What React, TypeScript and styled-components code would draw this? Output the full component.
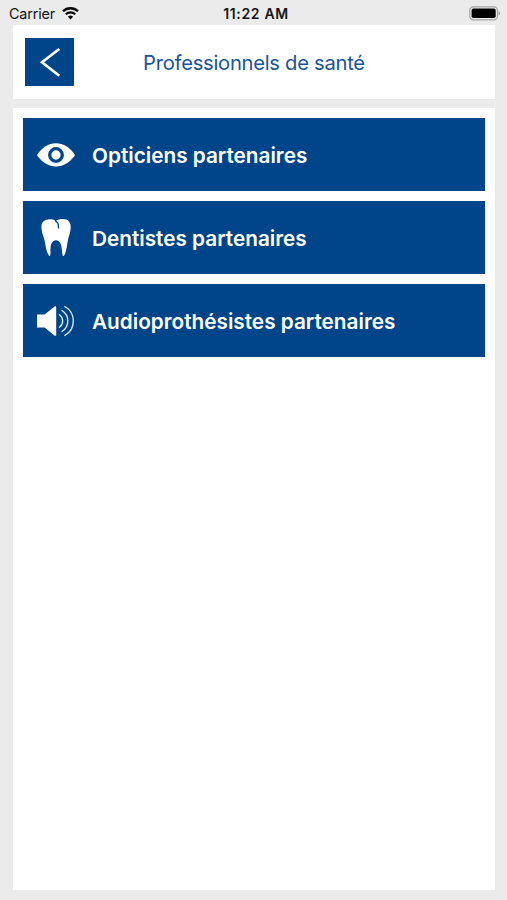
import React from "react";
import styled, { createGlobalStyle } from "styled-components";

const BLUE = "#004489";

const GlobalStyle = createGlobalStyle`
  * { box-sizing: border-box; }
  body {
    margin: 0;
    background: #ebebeb;
    font-family: Inter, "Liberation Sans", sans-serif;
  }
`;

const Screen = styled.div`
  width: 507px;
  height: 900px;
  display: flex;
  flex-direction: column;
  background: #ebebeb;
`;

const StatusBar = styled.div`
  flex: none;
  height: 25.3px;
  padding: 1px 6px 0 9px;
  display: grid;
  grid-template-columns: 1fr auto 1fr;
  align-items: center;
  color: #151515;
`;

const Carrier = styled.div`
  display: flex;
  align-items: center;
  gap: 7px;
  font-size: 14.4px;
  letter-spacing: -0.15px;
`;

const Clock = styled.div`
  margin-right: -2px;
  font-size: 14px;
  font-weight: 600;
  letter-spacing: 0.65px;
`;

const BatterySlot = styled.div`
  display: flex;
  justify-content: flex-end;
`;

const Header = styled.header`
  flex: none;
  height: 73.4px;
  margin: 0 12px 0 13px;
  padding: 0 12.4px;
  display: grid;
  grid-template-columns: 48.7px 1fr 48.7px;
  align-items: center;
  background: #fff;
`;

const BackButton = styled.button`
  width: 48.7px;
  height: 48.7px;
  padding: 0;
  border: 0;
  display: flex;
  background: ${BLUE};
`;

const Title = styled.h1`
  margin: 0;
  padding-top: 2px;
  text-align: center;
  font-size: 20.2px;
  line-height: 24px;
  font-weight: 400;
  letter-spacing: -0.27px;
  white-space: nowrap;
  color: #17569a;
`;

const Content = styled.main`
  flex: 1;
  margin: 9.5px 12px 10px 13px;
  padding: 10px;
  display: flex;
  flex-direction: column;
  gap: 10px;
  background: #fff;
`;

const Row = styled.a`
  height: 73px;
  padding-left: 12px;
  display: flex;
  align-items: center;
  gap: 15px;
  background: ${BLUE};
  color: #fff;
`;

const Label = styled.span`
  padding-top: 3px;
  font-size: 20.75px;
  font-weight: 600;
  line-height: 24px;
  white-space: nowrap;
`;

const Icon = styled.svg`
  display: block;
  flex: none;
`;

const Wifi = () => (
  <Icon width="17" height="13" viewBox="0 0 17 13" fill="none" stroke="#080808">
    <path d="M1 4.3a10.7 10.7 0 0 1 15 0" strokeWidth="2.3" />
    <path d="M3.8 7.3a6.7 6.7 0 0 1 9.4 0" strokeWidth="2.2" />
    <path d="M5.9 9.7a3.8 3.8 0 0 1 5.2 0L8.5 12.4Z" fill="#080808" stroke="none" />
  </Icon>
);

const Battery = () => (
  <Icon width="32" height="15" viewBox="0 0 32 15">
    <rect x="0.8" y="0.8" width="27.7" height="13" rx="3.6" fill="#ececec" stroke="#a5a5a5" strokeWidth="1.2" />
    <rect x="2.6" y="2.6" width="24.1" height="9.5" rx="1.8" fill="#000" />
    <path d="M29.7 5.2c1.7.5 1.7 3.8 0 4.3Z" fill="#929292" />
  </Icon>
);

const Chevron = () => (
  <Icon width="48.7" height="48.7" viewBox="0 0 48.7 48.7">
    <path d="M34.300 11 17 24.300l17.300 13.500" fill="none" stroke="#fff" strokeWidth="2.7" />
  </Icon>
);

const Eye = () => (
  <Icon width="42" height="42" viewBox="0 0 42 42">
    <path d="M2 21C7 13.500 13.500 9.300 21 9.300S35 13.500 40 21C35 28.500 28.500 32.500 21 32.500S7 28.500 2 21Z" fill="#fff" />
    <circle cx="21" cy="21" r="6.3" fill="#fff" stroke={BLUE} strokeWidth="3.3" />
  </Icon>
);

const Tooth = () => (
  <Icon width="42" height="42" viewBox="0 0 42 42">
    <path d="M20.800 3.600C24.500 1.500 31 1.100 34 4.500C37 8 35.500 15 33.500 20.500C32 26 32 34.500 28.800 39C27.500 39.500 27.300 37 27 34C26.500 28 25.500 23.500 21 23.200C16.300 23.400 15.400 28.500 15.500 34C15.600 37 15.400 39.500 14.200 39C10.500 34 10.700 26 8.700 20.500C6.500 14 5 7.500 8.400 4.500C11.700 1.500 16.700 1.600 20.800 3.600Z" fill="#fff" />
    <path d="M20.200 3C20.800 4.600 21.600 5.300 22.800 6C23.700 7.600 23.200 9.800 23.600 11.500" fill="none" stroke={BLUE} strokeWidth="1.4" />
  </Icon>
);

const Speaker = () => (
  <Icon width="42" height="42" viewBox="0 0 42 42">
    <path d="M2 14.500h7.600L19.300 6.700q1.900-1 1.900 1v27q0 1.500-1.900.7L9.600 27.400H2Z" fill="#fff" />
    <g fill="none" stroke="#dceaf7" strokeWidth="1.400" strokeLinecap="round">
      <path d="M24.500 14.700a7.900 7.900 0 0 1 0 12.600" />
      <path d="M27 10.500a12.400 12.400 0 0 1 0 21" />
      <path d="M29.800 6.500a16.600 16.600 0 0 1 0 29" />
    </g>
  </Icon>
);

const entries = [
  { label: "Opticiens partenaires", icon: <Eye /> },
  { label: "Dentistes partenaires", icon: <Tooth /> },
  { label: "Audioprothésistes partenaires", icon: <Speaker /> },
];

export default function App() {
  return (
    <Screen>
      <GlobalStyle />
      <StatusBar>
        <Carrier>Carrier <Wifi /></Carrier>
        <Clock>11:22 AM</Clock>
        <BatterySlot><Battery /></BatterySlot>
      </StatusBar>
      <Header>
        <BackButton aria-label="Retour"><Chevron /></BackButton>
        <Title>Professionnels de santé</Title>
      </Header>
      <Content>
        {entries.map((entry) => (
          <Row key={entry.label}>
            {entry.icon}
            <Label>{entry.label}</Label>
          </Row>
        ))}
      </Content>
    </Screen>
  );
}
